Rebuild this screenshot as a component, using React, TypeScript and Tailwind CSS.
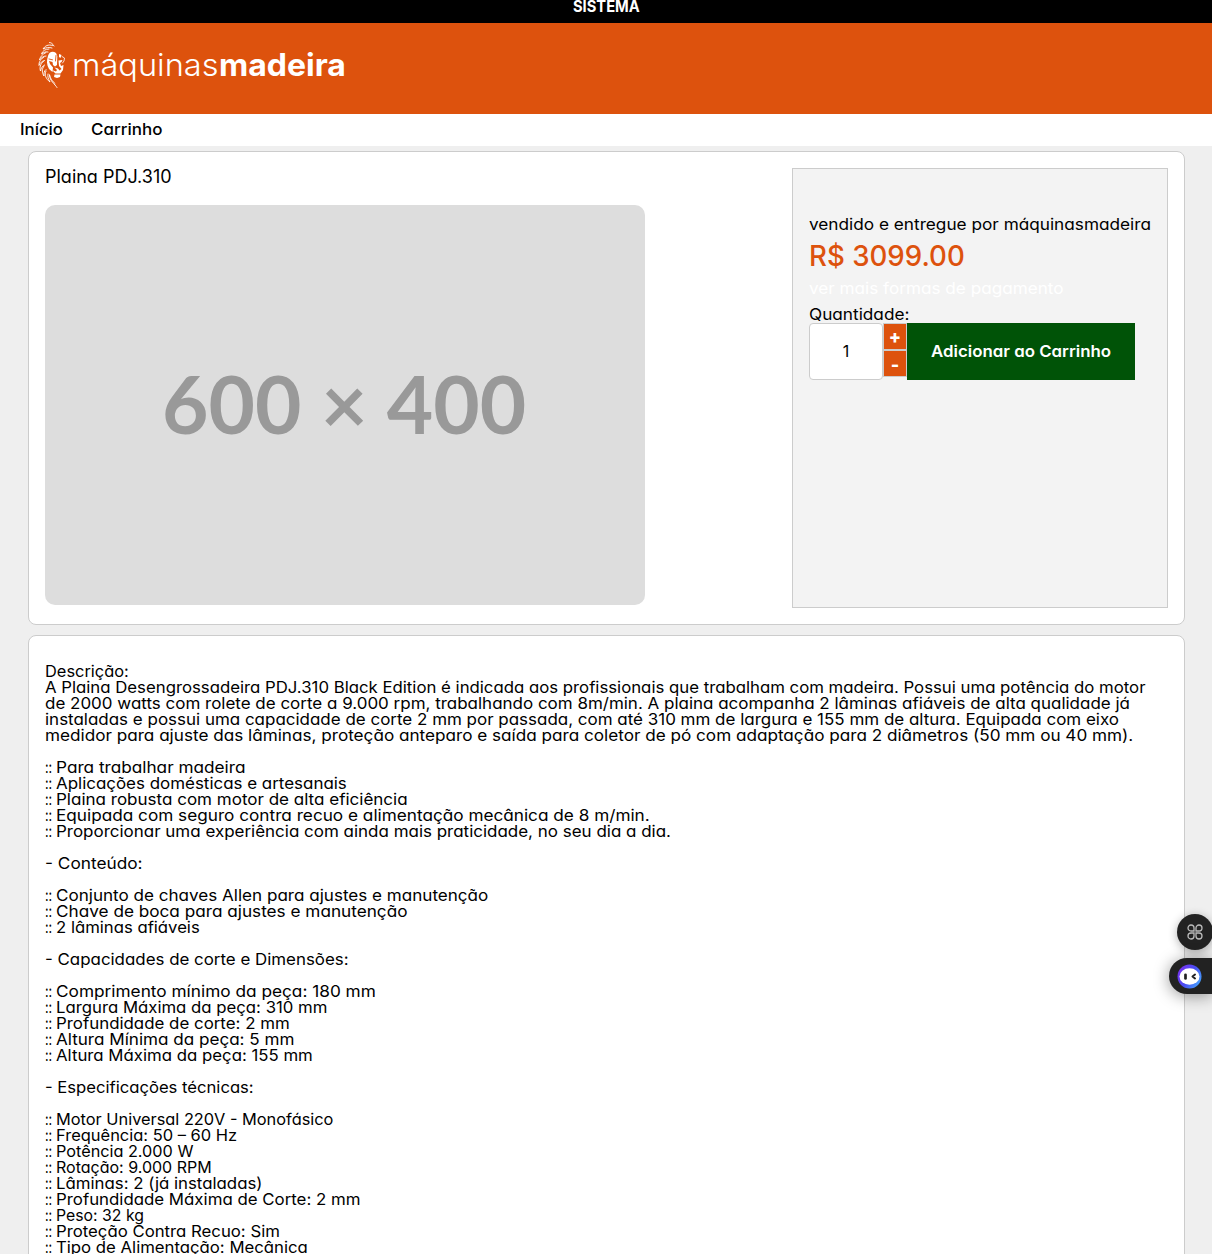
import { useLayoutEffect, useRef, useState } from "react";

/** Single line of text whose glyphs are widened or narrowed so that it spans `w` pixels. */
function Fit({ text, w, className = "" }: { text: string; w: number; className?: string }) {
  const ref = useRef<HTMLSpanElement>(null);
  const [scale, setScale] = useState(1);
  useLayoutEffect(() => {
    const el = ref.current;
    if (el) setScale(w / el.offsetWidth);
  }, [text, w]);
  return (
    <span className={`block shrink-0 whitespace-pre text-left ${className}`} style={{ width: w }}>
      <span ref={ref} className="inline-block origin-left" style={{ transform: `scaleX(${scale})` }}>
        {text}
      </span>
    </span>
  );
}

const description: [string, number][] = [
  ["Descrição:", 84],
  ["A Plaina Desengrossadeira PDJ.310 Black Edition é indicada aos profissionais que trabalham com madeira. Possui uma potência do motor", 1101],
  ["de 2000 watts com rolete de corte a 9.000 rpm, trabalhando com 8m/min. A plaina acompanha 2 lâminas afiáveis de alta qualidade já", 1085],
  ["instaladas e possui uma capacidade de corte 2 mm por passada, com até 310 mm de largura e 155 mm de altura. Equipada com eixo", 1074],
  ["medidor para ajuste das lâminas, proteção anteparo e saída para coletor de pó com adaptação para 2 diâmetros (50 mm ou 40 mm).", 1088],
  ["", 0],
  [":: Para trabalhar madeira", 200],
  [":: Aplicações domésticas e artesanais", 302],
  [":: Plaina robusta com motor de alta eficiência", 363],
  [":: Equipada com seguro contra recuo e alimentação mecânica de 8 m/min.", 605],
  [":: Proporcionar uma experiência com ainda mais praticidade, no seu dia a dia.", 626],
  ["", 0],
  ["- Conteúdo:", 97],
  ["", 0],
  [":: Conjunto de chaves Allen para ajustes e manutenção", 443],
  [":: Chave de boca para ajustes e manutenção", 362],
  [":: 2 lâminas afiáveis", 155],
  ["", 0],
  ["- Capacidades de corte e Dimensões:", 304],
  ["", 0],
  [":: Comprimento mínimo da peça: 180 mm", 331],
  [":: Largura Máxima da peça: 310 mm", 282],
  [":: Profundidade de corte: 2 mm", 245],
  [":: Altura Mínima da peça: 5 mm", 249],
  [":: Altura Máxima da peça: 155 mm", 268],
  ["", 0],
  ["- Especificações técnicas:", 209],
  ["", 0],
  [":: Motor Universal 220V - Monofásico", 288],
  [":: Frequência: 50 – 60 Hz", 192],
  [":: Potência 2.000 W", 148],
  [":: Rotação: 9.000 RPM", 167],
  [":: Lâminas: 2 (já instaladas)", 217],
  [":: Profundidade Máxima de Corte: 2 mm", 315],
  [":: Peso: 32 kg", 99],
  [":: Proteção Contra Recuo: Sim", 235],
  [":: Tipo de Alimentação: Mecânica", 263],
];

function DescriptionLine({ text, w }: { text: string; w: number }) {
  if (!text) return null;
  if (!text.startsWith(":: ")) return <Fit text={text} w={w} />;
  return (
    <>
      <Fit text="::" w={7} className="mr-1" />
      <Fit text={text.slice(3)} w={w - 11} />
    </>
  );
}

function Lion() {
  return (
    <svg className="h-12 w-7 shrink-0" viewBox="0 0 28 48" fill="none" stroke="#fff" strokeLinecap="round">
      <path strokeWidth="0.9" d="M16 5C14.5 2.5 13 1.5 11.5 1.5M14.5 4.5C10 3 7 5 5 8C8 6.5 11 6 14 7M11 8C7 8 4.500 10 3.500 13C6 11 8 10.500 10 11M8 11.500C4.500 13 2 16 1.500 19C3.500 16.500 5.500 15 8 15M6 16C2.500 18 0.800 21 1 24.500C2.500 21.500 4 20 6.500 19.500M5.500 20.500C2 23 1.500 27 2.500 30C3 27 4.500 25 6.500 24M6 25C3.500 28 4 32 6 35C5.800 32 6 30 8 28.500M8 30C6 34 8 38 12 41C10 37.500 9.500 35.500 10 33M11.500 34C11.500 40 17 43 19 46.500M11.500 34C12.500 38 14 40 17 42.500" />
      <path fill="#fff" stroke="none" d="M10 15C11 10.500 15 9.500 18 12L19.300 15L19 24L17 25.500L15 24L14.500 21L11 20L12 23L15 26.500L14.500 31L11 28C8.500 24 8.500 19 10 15ZM21 13L23.500 14L22.500 17L21 16ZM20.500 19.500L24.500 19L23.500 21L22 22L23 25L25.500 24L25 29L22.500 32.500L17.500 32.500L14 29L18 30.500L19 29L16.500 26.500L20 27.500L21.500 29.500L23.500 28L21 25ZM16.500 33.500L22.500 33.500L22 36L19 37L16 36Z" />
      <path strokeWidth="0.8" d="M24 15.500L26.500 17L26 20L24.500 22" />
      <path stroke="#dd520d" strokeWidth="0.9" d="M11 18L14.500 18.800M18 14.500L17.500 20" />
    </svg>
  );
}

export default function App() {
  return (
    <div className="relative h-[1254px] w-full overflow-hidden bg-[#efefef] font-['Inter',sans-serif] text-base leading-4 text-black [font-feature-settings:'cv11']">
      <div className="flex h-[23px] justify-center bg-black text-white">
        <Fit text="SISTEMA" w={67} className="-mt-0.5 font-bold" />
      </div>
      <header className="flex h-[91px] items-start bg-[#dd520d] pl-[38px] pt-[18px] text-white">
        <Lion />
        <div className="ml-[6px] mt-[5px] flex text-[31px] leading-[38px] [font-feature-settings:normal]">
          <Fit text="máquinas" w={147} className="font-light" />
          <Fit text="madeira" w={127} className="font-bold" />
        </div>
      </header>
      <nav className="flex h-8 items-center gap-7 bg-white pb-0.5 pl-5 font-medium">
        <Fit text="Início" w={43} />
        <Fit text="Carrinho" w={71} />
      </nav>

      <main className="ml-7 mt-[5px] w-[1157px]">
        <section className="flex h-[474px] justify-between rounded-lg border border-[#ccc] bg-white p-4">
          <div>
            <h1 className="h-[37px] pt-px text-lg leading-4">
              <Fit text="Plaina PDJ.310" w={127} />
            </h1>
            <div className="flex h-[400px] w-[600px] items-center justify-center rounded-[10px] bg-[#ddd] pb-[5px] pr-0.5 font-['Lato',sans-serif] text-[81px] font-bold leading-none text-[#999]">
              <Fit text="600 × 400" w={364} />
            </div>
          </div>
          <aside className="flex h-[440px] w-[376px] flex-col items-start border border-[#ccc] bg-[#f3f3f3] px-4 pt-[47px]">
            <Fit text="vendido e entregue por máquinasmadeira" w={342} />
            <div className="mt-2 text-[28px] font-medium leading-8 text-[#dd520d]">
              <Fit text="R$ 3099.00" w={156} />
            </div>
            <Fit text="ver mais formas de pagamento" w={255} className="mt-2 text-white" />
            <Fit text="Quantidade:" w={100} className="mt-[10px]" />
            <div className="mt-px flex items-start">
              <div className="flex h-[57px] w-[74px] items-center justify-center rounded border border-[#ccc] bg-white pb-px">1</div>
              <div className="flex w-6 flex-col text-lg font-extrabold leading-4 text-white">
                <button className="flex h-[27px] items-center justify-center border border-[#ccc] bg-[#dd520d]">+</button>
                <button className="flex h-[27px] items-center justify-center border border-[#ccc] bg-[#dd520d] pt-0.5">-</button>
              </div>
              <button className="flex h-[57px] w-[228px] items-center justify-center bg-[#005307] pb-px font-semibold text-white">
                <Fit text="Adicionar ao Carrinho" w={180} />
              </button>
            </div>
          </aside>
        </section>

        <section className="mt-[10px] h-[700px] rounded-t-lg border border-[#ccc] bg-white px-4 pt-[27px]">
          {description.map(([text, w], i) => (
            <div key={i} className="flex h-4">
              <DescriptionLine text={text} w={w} />
            </div>
          ))}
        </section>
      </main>

      <div className="absolute right-0 top-[914px] flex flex-col items-end gap-2">
        <button className="-mr-px flex size-9 items-center justify-center rounded-full bg-[#222] shadow-[0_2px_10px_rgba(0,0,0,0.3)]">
          <svg className="size-4" viewBox="0 0 16 16" fill="none" stroke="#bbb" strokeWidth="1.3">
            <path d="M7 7H4A3 3 0 1 1 7 4ZM9 7V4A3 3 0 1 1 12 7ZM7 9V12A3 3 0 1 1 4 9ZM9 9H12A3 3 0 1 1 9 12Z" />
          </svg>
        </button>
        <button className="flex h-9 w-[43px] items-center rounded-l-full bg-[#222] pl-2 shadow-[0_2px_16px_rgba(0,0,0,0.4)]">
          <svg className="size-[25px]" viewBox="0 0 25 25">
            <defs>
              <linearGradient id="ring" x1="0" y1="0.2" x2="1" y2="0.8">
                <stop offset="0" stopColor="#7b2ff0" />
                <stop offset="0.5" stopColor="#494cf2" />
                <stop offset="1" stopColor="#45a9ff" />
              </linearGradient>
            </defs>
            <circle cx="12.5" cy="12.5" r="12" fill="url(#ring)" />
            <ellipse cx="12.5" cy="12.5" rx="10" ry="8.3" fill="#fff" />
            <path d="M8.500 10.800V14.500" stroke="#222" strokeWidth="2.700" strokeLinecap="round" />
            <path d="M18 10.500L15.500 12.500L18 14.500" fill="none" stroke="#222" strokeWidth="2" strokeLinecap="round" strokeLinejoin="round" />
          </svg>
        </button>
      </div>
    </div>
  );
}
